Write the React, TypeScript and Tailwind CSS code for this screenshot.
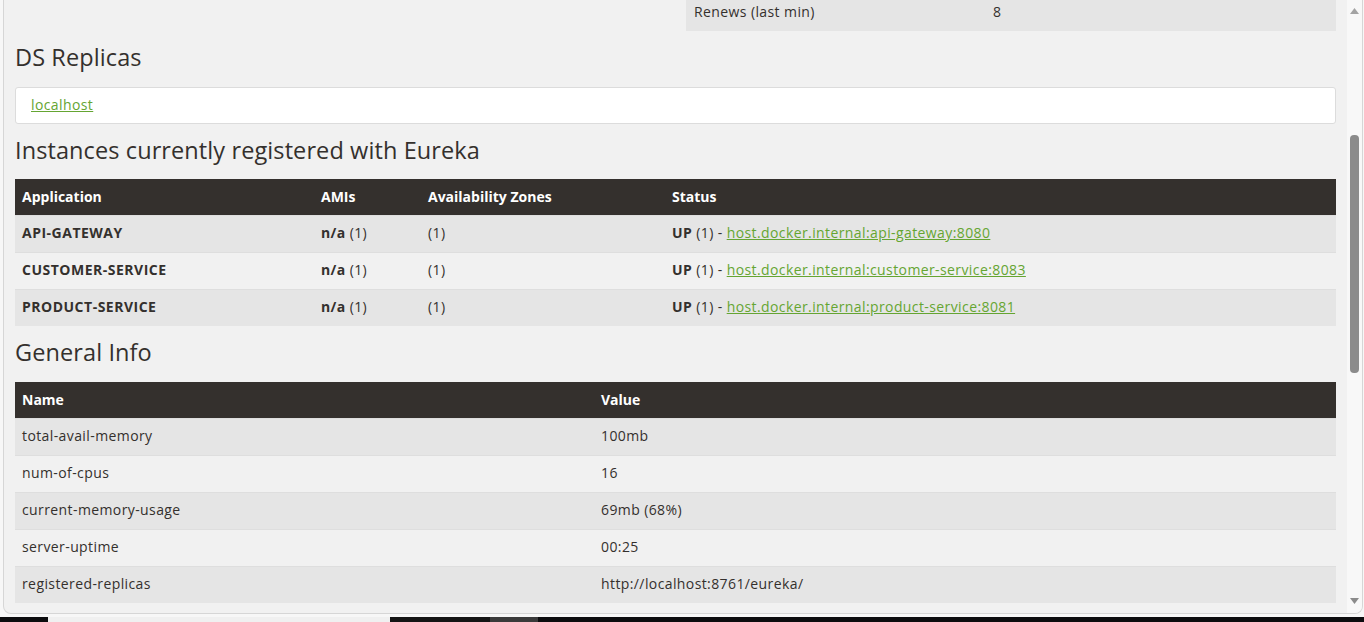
const instances = [
  { app: 'API-GATEWAY', url: 'host.docker.internal:api-gateway:8080' },
  { app: 'CUSTOMER-SERVICE', url: 'host.docker.internal:customer-service:8083' },
  { app: 'PRODUCT-SERVICE', url: 'host.docker.internal:product-service:8081' },
]

const info = [
  ['total-avail-memory', '100mb'],
  ['num-of-cpus', '16'],
  ['current-memory-usage', '69mb (68%)'],
  ['server-uptime', '00:25'],
  ['registered-replicas', 'http://localhost:8761/eureka/'],
]

function Heading({ children, tight }: { children: React.ReactNode; tight?: boolean }) {
  return (
    <h1
      className={`pt-[11px] ${tight ? 'pb-[14px]' : 'pb-[15px]'} text-[23.5px] leading-[30px] tracking-[0.1px] font-['Open_Sans',sans-serif] text-[#34302d]`}
    >
      {children}
    </h1>
  )
}

export default function App() {
  return (
    <div className="w-[1364px] h-[622px] overflow-hidden bg-[#f7f7f7] flex flex-col font-['Open_Sans',sans-serif] text-[14px] text-[#34302d]">
      {/* Window */}
      <div className="ml-[3px] mr-[1px] h-[614px] shrink-0 flex border-l border-b border-r border-[#d6d6d6] rounded-b-[8px] overflow-hidden bg-[#f1f1f1]">
        <div className="flex-1 px-[11px] overflow-hidden">
          {/* tail of the status table */}
          <div className="flex justify-end">
            <div className="w-[650px] h-[37px] -mt-[6px] pb-[3px] bg-[#e5e5e5] grid grid-cols-[299px_1fr] items-center px-[8px] tracking-[0.4px]">
              <span>Renews (last min)</span>
              <span>8</span>
            </div>
          </div>

          <Heading>DS Replicas</Heading>
          <div className="h-[37px] bg-white border border-[#dcdcdc] rounded-[3px] flex items-center px-[15px] pb-[2px] tracking-[0.4px]">
            <a className="text-[#65a532] underline" href="#">localhost</a>
          </div>

          <Heading tight>Instances currently registered with Eureka</Heading>
          <div>
            <div className="h-[36px] bg-[#34302d] text-white font-bold grid grid-cols-[299px_107px_244px_1fr] items-center px-[7px] pb-[2px]">
              <span>Application</span>
              <span>AMIs</span>
              <span>Availability Zones</span>
              <span>Status</span>
            </div>
            {instances.map((r, i) => (
              <div
                key={r.app}
                className={`h-[37px] border-t border-[#dedede] grid grid-cols-[299px_107px_244px_1fr] items-center px-[7px] pb-[3px] tracking-[0.4px] ${i % 2 === 0 ? 'bg-[#e5e5e5]' : 'bg-[#f1f1f1]'}`}
              >
                <span className="font-bold tracking-[0.5px]">{r.app}</span>
                <span><b>n/a</b> (1)</span>
                <span>(1)</span>
                <span>
                  <b>UP</b> (1) - <a className="text-[#65a532] underline" href="#">{r.url}</a>
                </span>
              </div>
            ))}
          </div>

          <Heading>General Info</Heading>
          <div>
            <div className="h-[36px] bg-[#34302d] text-white font-bold grid grid-cols-[579px_1fr] items-center px-[7px] pb-[2px]">
              <span>Name</span>
              <span>Value</span>
            </div>
            {info.map(([k, v], i) => (
              <div
                key={k}
                className={`h-[37px] border-t border-[#dedede] grid grid-cols-[579px_1fr] items-center px-[7px] pb-[3px] tracking-[0.4px] ${i % 2 === 0 ? 'bg-[#e5e5e5]' : 'bg-[#f1f1f1]'}`}
              >
                <span>{k}</span>
                <span>{v}</span>
              </div>
            ))}
          </div>
        </div>

        {/* Scrollbar */}
        <div className="w-[15px] shrink-0 bg-[#f8f8f8] flex flex-col items-center">
          <svg width="9" height="6" viewBox="0 0 9 6" className="mt-[8px]">
            <polygon points="4.5,0 9,6 0,6" fill="#a3a3a3" />
          </svg>
          <div className="flex-1 w-full relative">
            <div className="absolute left-[3px] top-[121px] w-[9px] h-[238px] rounded-[4px] bg-[#8b8b8b]" />
          </div>
          <svg width="9" height="6" viewBox="0 0 9 6" className="mb-[9px]">
            <polygon points="0,0 9,0 4.5,6" fill="#8b8b8b" />
          </svg>
        </div>
      </div>

      {/* taskbar strip */}
      <div className="mt-[3px] flex-1 flex bg-[#0c0c0e]">
        <div className="w-[48px]" />
        <div className="w-[342px] bg-[#f0f0f0]" />
        <div className="w-[100px] bg-[#141414]" />
        <div className="w-[48px] bg-[#3a3a3a]" />
      </div>
    </div>
  )
}
